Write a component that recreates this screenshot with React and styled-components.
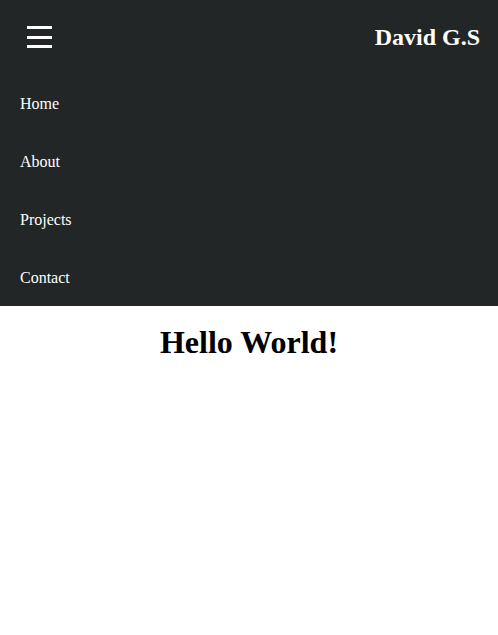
import React from 'react';
import styled, { createGlobalStyle } from 'styled-components';

const GlobalStyle = createGlobalStyle`
  body {
    margin: 0;
    font-family: "Liberation Serif", "Times New Roman", serif;
    background: #fff;
  }
`;

const Header = styled.header`
  background: #222626;
  color: #fff;
`;

const TopBar = styled.div`
  height: 74px;
  display: flex;
  align-items: center;
  justify-content: space-between;
  padding: 0 18px 0 27px;
`;

const Burger = styled.button`
  width: 25px;
  height: 22px;
  padding: 0;
  border: none;
  background: none;
  display: flex;
  flex-direction: column;
  justify-content: space-between;
  cursor: pointer;

  span {
    display: block;
    height: 3px;
    background: #fff;
  }
`;

const Brand = styled.div`
  font-size: 24px;
  font-weight: bold;
`;

const NavList = styled.ul`
  list-style: none;
  margin: 0;
  padding: 0;
`;

const NavItem = styled.li`
  height: 58px;
  box-sizing: border-box;
  padding: 2px 0 0 20px;
  display: flex;
  align-items: center;
  font-size: 16px;
`;

const Main = styled.main`
  text-align: center;
`;

const Title = styled.h1`
  font-size: 32px;
  margin: 18px 0;
`;

export default function App() {
  return (
    <>
      <GlobalStyle />
      <Header>
        <TopBar>
          <Burger aria-label="menu">
            <span />
            <span />
            <span />
          </Burger>
          <Brand>David G.S</Brand>
        </TopBar>
        <NavList>
          {['Home', 'About', 'Projects', 'Contact'].map((item) => (
            <NavItem key={item}>{item}</NavItem>
          ))}
        </NavList>
      </Header>
      <Main>
        <Title>Hello World!</Title>
      </Main>
    </>
  );
}
